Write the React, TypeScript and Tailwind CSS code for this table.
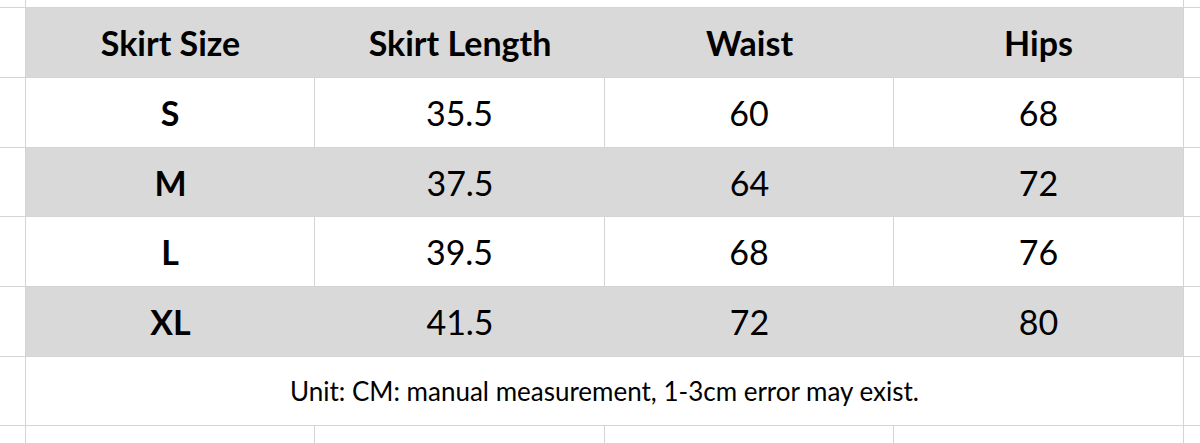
import React from "react";

const rows = [
  { size: "S", len: "35.5", waist: "60", hips: "68", gray: false, h: "h-[70px]" },
  { size: "M", len: "37.5", waist: "64", hips: "72", gray: true, h: "h-[69px]" },
  { size: "L", len: "39.5", waist: "68", hips: "76", gray: false, h: "h-[70px]" },
  { size: "XL", len: "41.5", waist: "72", hips: "80", gray: true, h: "h-[70px]" },
];

const widths = ["w-[289px]", "w-[290px]", "w-[289px]", "w-[290px]"];

function Row({
  cells,
  gray,
  h,
  bold,
}: {
  cells: string[];
  gray: boolean;
  h: string;
  bold?: boolean[];
}) {
  return (
    <div className={`flex ${h} border-b border-[#d4d4d4]`}>
      <div className="w-[26px] shrink-0 border-r border-[#d4d4d4]" />
      {cells.map((c, i) => (
        <div
          key={i}
          className={`${widths[i]} shrink-0 flex items-center justify-center text-[34px] text-black ${
            gray ? "bg-[#d9d9d9]" : "bg-white"
          } ${!gray || i === 3 ? "border-r border-[#d4d4d4]" : ""} ${
            bold && bold[i] ? "font-bold" : "font-normal"
          }`}
        >
          {c}
        </div>
      ))}
      <div className="flex-1" />
    </div>
  );
}

export default function App() {
  return (
    <div
      className="w-[1200px] h-[443px] overflow-hidden bg-white"
      style={{ fontFamily: "Lato, 'Open Sans', sans-serif" }}
    >
      <div className="flex h-[8px] border-b border-[#d4d4d4]">
        <div className="w-[26px] shrink-0 border-r border-[#d4d4d4]" />
        <div className="w-[1158px] shrink-0 border-r border-[#d4d4d4]" />
        <div className="flex-1" />
      </div>
      <Row
        cells={["Skirt Size", "Skirt Length", "Waist", "Hips"]}
        gray={true}
        h="h-[70px]"
        bold={[true, true, true, true]}
      />
      {rows.map((r) => (
        <Row
          key={r.size}
          cells={[r.size, r.len, r.waist, r.hips]}
          gray={r.gray}
          h={r.h}
          bold={[true, false, false, false]}
        />
      ))}
      <div className="flex h-[69px] border-b border-[#d4d4d4]">
        <div className="w-[26px] shrink-0 border-r border-[#d4d4d4]" />
        <div className="w-[1158px] shrink-0 border-r border-[#d4d4d4] flex items-center justify-center text-[26px] text-black">
          Unit: CM: manual measurement, 1-3cm error may exist.
        </div>
        <div className="flex-1" />
      </div>
      <div className="flex h-[40px]">
        <div className="w-[26px] shrink-0 border-r border-[#d4d4d4]" />
        {widths.map((w, i) => (
          <div key={i} className={`${w} shrink-0 border-r border-[#d4d4d4]`} />
        ))}
        <div className="flex-1" />
      </div>
    </div>
  );
}
